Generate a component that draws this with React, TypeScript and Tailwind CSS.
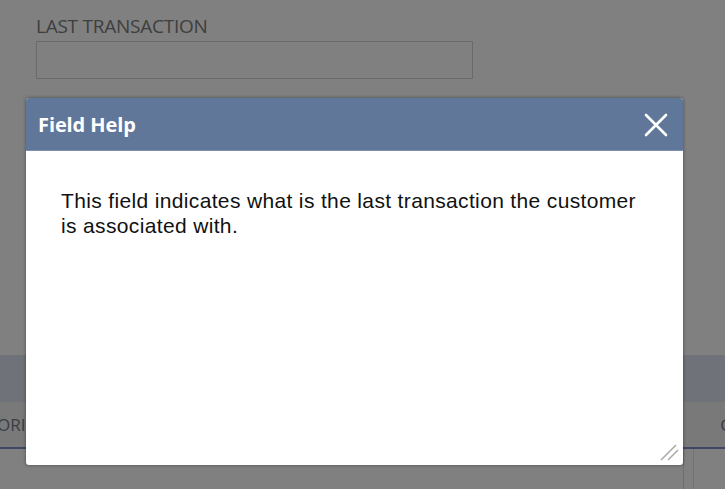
import React from "react";

export default function App() {
  return (
    <div className="relative w-[725px] h-[489px] overflow-hidden bg-[#808080]">
      {/* background page content (dimmed) */}
      <div className="flex flex-col h-full">
        <div className="pl-[36px] pt-[14px] h-[355px]">
          <div className="text-[19px] leading-[24px] text-[#3e3e3e] font-['Open_Sans',sans-serif] tracking-[-0.25px]">
            LAST TRANSACTION
          </div>
          <div className="mt-[3px] w-[437px] h-[38px] border border-[#6a6a6a]" />
        </div>
        <div className="h-[47px] bg-[#6f7379]" />
        <div className="h-[45px] bg-[#797979] flex items-center justify-between font-['Open_Sans',sans-serif] text-[17px] text-[#3a3d45]">
          <span className="-ml-[3px]">ORI</span>
          <span className="-mr-[6px]">C</span>
        </div>
        <div className="h-[2px] bg-[#3d4862]" />
        <div className="flex-1 flex">
          <div className="w-[683px] h-full" />
          <div className="w-[1px] bg-[#6e6e6e]" />
          <div className="w-[9px]" />
          <div className="w-[1px] bg-[#727272]" />
        </div>
      </div>

      {/* modal */}
      <div className="absolute left-[26px] top-[98px] w-[657px] h-[367px] rounded-[3px] bg-white shadow-[0_0_3px_1px_rgba(0,0,0,0.25)] overflow-hidden flex flex-col">
        <div className="h-[53px] shrink-0 bg-[#607799] border-b border-[#7d91b0] flex items-center justify-between pl-[12px] pr-[15px]">
          <span className="text-white font-bold text-[20px] font-['Open_Sans',sans-serif] tracking-[-0.1px] mt-[1px]">
            Field Help
          </span>
          <svg width="24" height="24" viewBox="0 0 24 24" className="mt-[1px]">
            <path d="M2 2 L22 22 M22 2 L2 22" stroke="white" strokeWidth="2.6" strokeLinecap="round" />
          </svg>
        </div>
        <div className="flex-1 relative pl-[35px] pr-[35px] pt-[37px]">
          <p className="text-[21px] leading-[25px] tracking-[0.35px] text-[#111] font-['Liberation_Sans',Arial,sans-serif]">
            This field indicates what is the last transaction the customer is associated with.
          </p>
          <svg width="22" height="20" viewBox="0 0 22 20" className="absolute right-[3px] bottom-[3px]">
            <path d="M3 18 L18 3 M10 18 L20 8" stroke="#a8a8a8" strokeWidth="1.5" />
          </svg>
        </div>
      </div>
    </div>
  );
}
